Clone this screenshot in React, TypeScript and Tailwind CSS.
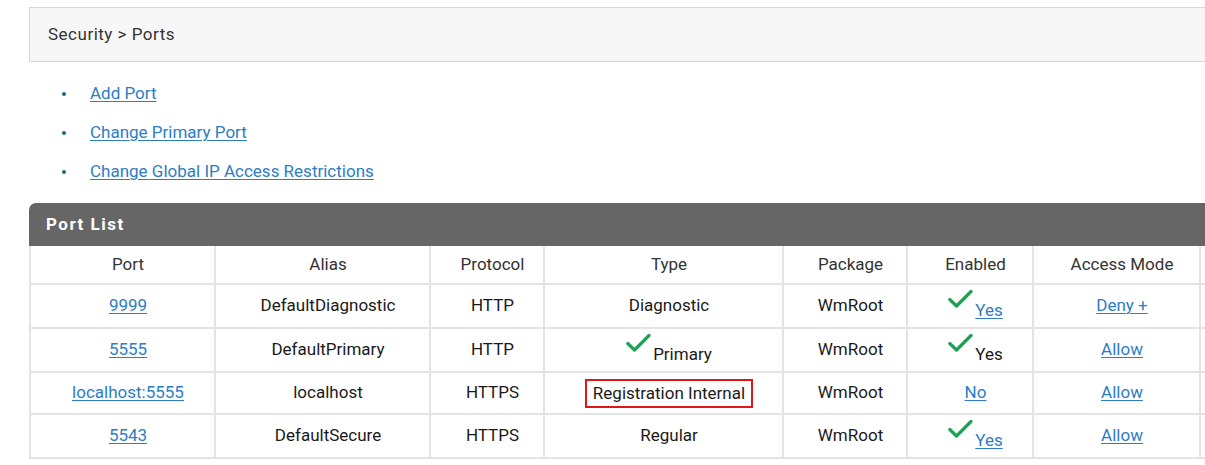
import React from "react";

const Check = () => (
  <svg width="25" height="20" viewBox="0 0 25 20" className="shrink-0 mt-[1px]">
    <path d="M1.8 10.5 L8.5 17 L23 2.5" fill="none" stroke="#1ea154" strokeWidth="3.2" strokeLinecap="round" strokeLinejoin="round" />
  </svg>
);

const A = ({ children }: { children: React.ReactNode }) => (
  <a href="#" className="text-[#2d7dc4] underline underline-offset-2 decoration-1">
    {children}
  </a>
);

const Checked = ({ children }: { children: React.ReactNode }) => (
  <span className="inline-flex items-start">
    <Check />
    <span className="pt-[10px] pl-[2px]">{children}</span>
  </span>
);

const rows = [
  { h: "h-[44px]", port: "9999", alias: "DefaultDiagnostic", proto: "HTTP", type: <>Diagnostic</>, enabled: <Checked><A>Yes</A></Checked>, mode: "Deny +" },
  { h: "h-[44px]", port: "5555", alias: "DefaultPrimary", proto: "HTTP", type: <Checked>Primary</Checked>, enabled: <Checked>Yes</Checked>, mode: "Allow" },
  {
    h: "h-[42px]",
    port: "localhost:5555",
    alias: "localhost",
    proto: "HTTPS",
    type: <span className="inline-block border-2 border-[#e3141b] px-[6px] py-[3px] leading-[19px]">Registration Internal</span>,
    enabled: <A>No</A>,
    mode: "Allow",
  },
  { h: "h-[44px]", port: "5543", alias: "DefaultSecure", proto: "HTTPS", type: <>Regular</>, enabled: <Checked><A>Yes</A></Checked>, mode: "Allow" },
];

const heads = ["Port", "Alias", "Protocol", "Type", "Package", "Enabled", "Access Mode", ""];
const widths = ["w-[185px]", "w-[215px]", "w-[114px]", "w-[239px]", "w-[124px]", "w-[126px]", "w-[167px]", "w-[100px]"];
const cell = "border-2 border-[#e4e4e4] pl-[11px]";

export default function App() {
  return (
    <div className="w-[1205px] h-[465px] overflow-hidden bg-white font-['Roboto',sans-serif] text-[17px] text-[#1a1a1a]">
      <div className="ml-[29px] pt-[7px] w-[1270px]">
        <div className="h-[55px] border border-[#d6d6d6] bg-[#f7f7f7] pl-[18px] flex items-center text-[#333] tracking-[0.5px]">
          Security &gt; Ports
        </div>

        <ul className="pt-[12px] pl-[33px]">
          {["Add Port", "Change Primary Port", "Change Global IP Access Restrictions"].map((t) => (
            <li key={t} className="h-[39px] flex items-center">
              <span className="w-[4px] h-[4px] rounded-full bg-[#1a6b8a] mr-[24px]" />
              <A>{t}</A>
            </li>
          ))}
        </ul>

        <div className="mt-[12px] h-[43px] bg-[#666666] rounded-tl-[7px] pl-[17px] flex items-center text-white font-bold tracking-[1.5px]">
          Port List
        </div>

        <table className="table-fixed border-collapse w-[1270px] text-center">
          <thead>
            <tr className="h-[38px]">
              {heads.map((h, i) => (
                <th key={i} className={`${widths[i]} ${cell} border-t-0 font-normal text-[#333]`}>
                  {h}
                </th>
              ))}
            </tr>
          </thead>
          <tbody>
            {rows.map((r) => (
              <tr key={r.port} className={r.h}>
                <td className={cell}><A>{r.port}</A></td>
                <td className={cell}>{r.alias}</td>
                <td className={cell}>{r.proto}</td>
                <td className={cell}>{r.type}</td>
                <td className={cell}>WmRoot</td>
                <td className={cell}>{r.enabled}</td>
                <td className={cell}><A>{r.mode}</A></td>
                <td className={cell}></td>
              </tr>
            ))}
          </tbody>
        </table>
      </div>
    </div>
  );
}
